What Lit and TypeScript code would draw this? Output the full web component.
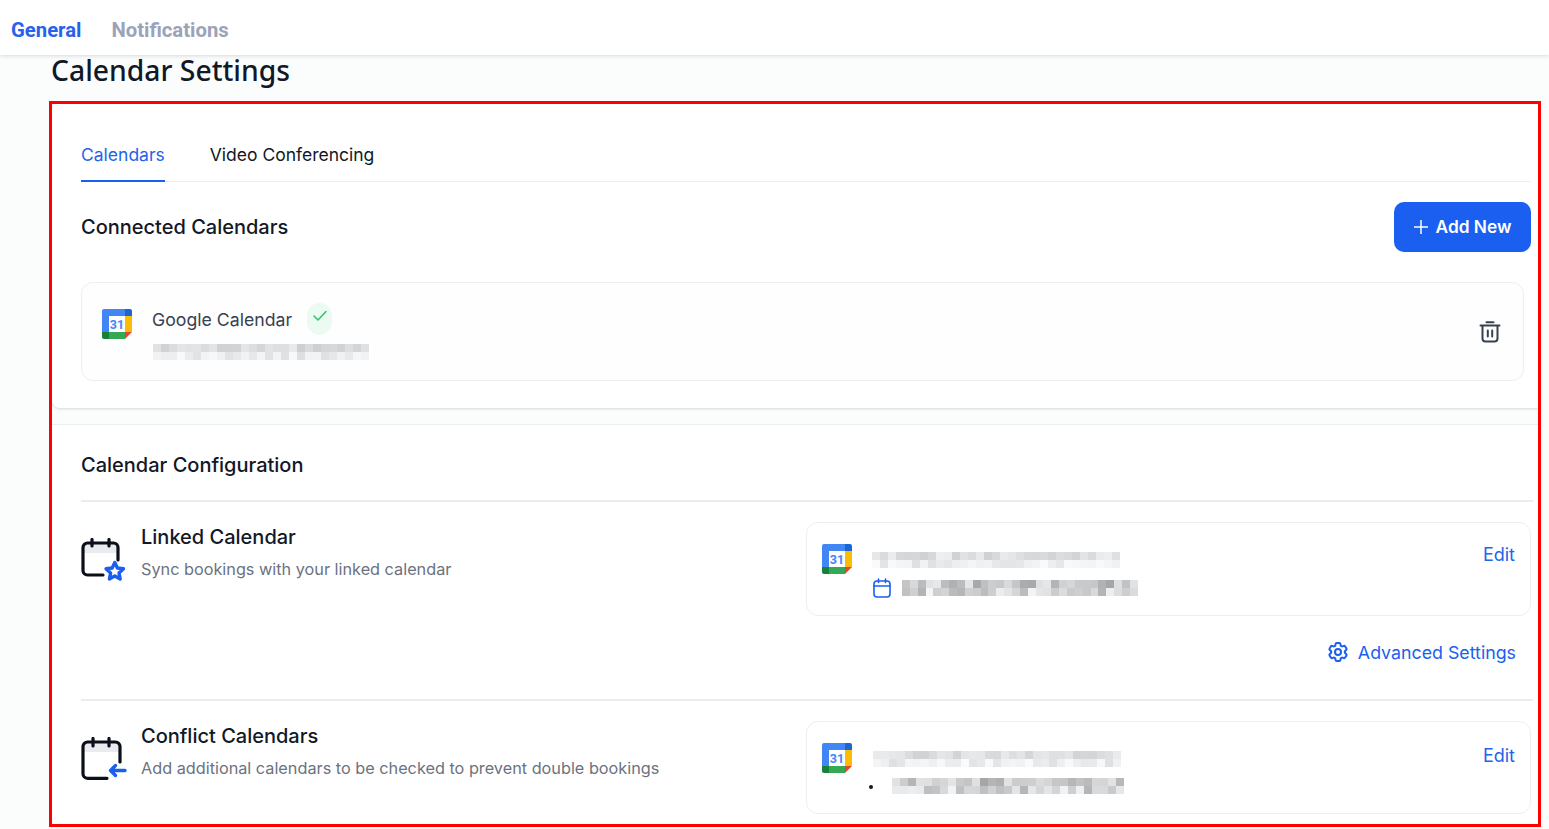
import { LitElement, html, css, svg } from "lit";
import { customElement, property } from "lit/decorators.js";

@customElement("blur-bar")
class BlurBar extends LitElement {
  @property({ type: Number }) cols = 27;
  @property({ type: Number }) seed = 1;
  @property({ type: Number }) low = 205;
  @property({ type: Number }) high = 240;
  @property({ type: Number }) cell = 8;
  static styles = css`
    :host { display: inline-block; line-height: 0; }
    .grid { display: grid; grid-auto-flow: row; }
    .c { display: block; }
  `;
  render() {
    let s = this.seed * 7919 + 13;
    const next = () => {
      s = (s * 1103515245 + 12345) & 0x7fffffff;
      return (s >> 8) % 1000 / 1000;
    };
    const cells = [];
    for (let r = 0; r < 2; r++) {
      for (let c = 0; c < this.cols; c++) {
        const bias = r === 0 ? 0 : 14;
        const v = Math.round(this.low + bias + next() * (this.high - this.low));
        cells.push(html`<i class="c" style="background:rgb(${v},${v + 1},${v + 3})"></i>`);
      }
    }
    return html`<div class="grid" style="grid-template-columns:repeat(${this.cols},${this.cell}px);grid-auto-rows:${this.cell}px">${cells}</div>`;
  }
}

const gcal = html`<svg class="gcal" width="30" height="30" viewBox="0 0 30 30" aria-hidden="true">
  <path d="M2 0H23V7H7V23H0V2A2 2 0 0 1 2 0Z" fill="#4285F4"/>
  <path d="M23 0H28A2 2 0 0 1 30 2V7H23Z" fill="#1967D2"/>
  <rect x="23" y="7" width="7" height="16" fill="#FBBC04"/>
  <rect x="7" y="23" width="16" height="7" fill="#34A853"/>
  <path d="M0 23H7V30H2A2 2 0 0 1 0 28Z" fill="#188038"/>
  <path d="M23 23H30L23 30Z" fill="#EA4335"/>
  <rect x="7" y="7" width="16" height="16" fill="#fff"/>
  <text x="15" y="19.800" text-anchor="middle" font-family="Roboto, sans-serif" font-weight="700" font-size="12.500" fill="#4285F4">31</text>
</svg>`;

const calStar = svg`<svg width="46" height="46" viewBox="0 0 46 46" fill="none" aria-hidden="true">
  <path d="M2 9.500A4.500 4.500 0 0 1 6.500 5H32.500A4.500 4.500 0 0 1 37 9.500V15H2Z" fill="#E9EBEF"/>
  <path d="M22 37H6.500A4.500 4.500 0 0 1 2 32.500V9.500A4.500 4.500 0 0 1 6.500 5H32.500A4.500 4.500 0 0 1 37 9.500V22" stroke="#0B0F19" stroke-width="3.200" stroke-linecap="round"/>
  <path d="M11 1.500V8M28 1.500V8" stroke="#0B0F19" stroke-width="3.200" stroke-linecap="round"/>
  <path d="M33.800 24.500L36.400 30L42.500 30.800L38 35L39.200 41L33.800 38L28.400 41L29.600 35L25 30.800L31.200 30Z" fill="#fff" stroke="#1A5FF0" stroke-width="3.400" stroke-linejoin="round"/>
</svg>`;

const calArrow = svg`<svg width="46" height="46" viewBox="0 0 46 46" fill="none" aria-hidden="true">
  <path d="M2 9.500A4.500 4.500 0 0 1 6.500 5H34.500A4.500 4.500 0 0 1 39 9.500V15H2Z" fill="#E9EBEF"/>
  <path d="M26 41.300H6.500A4.500 4.500 0 0 1 2 36.800V9.500A4.500 4.500 0 0 1 6.500 5H34.500A4.500 4.500 0 0 1 39 9.500V25" stroke="#0B0F19" stroke-width="3.200" stroke-linecap="round"/>
  <path d="M12 1.500V9M28 1.500V9" stroke="#0B0F19" stroke-width="3.200" stroke-linecap="round"/>
  <path d="M44 33.500H30M34.500 28.500L29.500 33.500L34.500 38.500" stroke="#1A5FF0" stroke-width="3.400" stroke-linecap="round" stroke-linejoin="round"/>
</svg>`;

const trash = svg`<svg width="22" height="22" viewBox="0 0 22 22" fill="none" stroke="#374151" stroke-width="2" stroke-linecap="round" stroke-linejoin="round" aria-hidden="true">
  <path d="M1.500 4.500H20.500"/><path d="M7.500 1.200H14.500"/>
  <path d="M3.500 5V17.500A3 3 0 0 0 6.500 20.500H15.500A3 3 0 0 0 18.500 17.500V5"/>
  <path d="M8.800 9.500V15.500M13.200 9.500V15.500"/>
</svg>`;

const smallCal = svg`<svg width="18" height="20" viewBox="0 0 18 20" fill="none" stroke="#1A5FF0" stroke-width="1.600" stroke-linecap="round" aria-hidden="true">
  <rect x="1" y="3" width="16" height="16" rx="3"/><path d="M1 8H17"/><path d="M5.500 1V4.500M12.500 1V4.500"/>
</svg>`;

const gear = svg`<svg width="24" height="24" viewBox="0 0 24 24" fill="none" stroke="#1A5FF0" stroke-width="2" stroke-linecap="round" stroke-linejoin="round" aria-hidden="true">
  <path d="M9.594 3.940c.09-.542.56-.94 1.110-.94h2.593c.55 0 1.020.398 1.110.94l.213 1.281c.063.374.313.686.645.87.074.04.147.083.22.127.325.196.72.257 1.075.124l1.217-.456a1.125 1.125 0 0 1 1.370.49l1.296 2.247a1.125 1.125 0 0 1-.26 1.431l-1.003.827c-.293.241-.438.613-.43.992a7.723 7.723 0 0 1 0 .255c-.008.378.137.75.43.991l1.004.827c.424.35.534.955.26 1.430l-1.298 2.247a1.125 1.125 0 0 1-1.369.491l-1.217-.456c-.355-.133-.75-.072-1.076.124a6.470 6.470 0 0 1-.22.128c-.331.183-.581.495-.644.869l-.213 1.281c-.09.543-.56.94-1.110.94h-2.594c-.55 0-1.019-.398-1.110-.94l-.213-1.281c-.062-.374-.312-.686-.644-.87a6.520 6.520 0 0 1-.22-.127c-.325-.196-.72-.257-1.076-.124l-1.217.456a1.125 1.125 0 0 1-1.369-.49l-1.297-2.247a1.125 1.125 0 0 1 .26-1.431l1.004-.827c.292-.24.437-.613.43-.991a6.932 6.932 0 0 1 0-.255c.007-.38-.138-.751-.43-.992l-1.004-.827a1.125 1.125 0 0 1-.26-1.430l1.297-2.247a1.125 1.125 0 0 1 1.370-.491l1.216.456c.356.133.751.072 1.076-.124.072-.044.146-.086.22-.128.332-.183.582-.495.644-.869l.214-1.280Z"/>
  <circle cx="12" cy="12" r="3"/>
</svg>`;

@customElement("app-root")
class AppRoot extends LitElement {
  static styles = css`
    :host {
      display: block;
      height: 829px;
      overflow: hidden;
      background: #fbfdfd;
      font-family: Inter, "Liberation Sans", sans-serif;
      color: #111827;
    }
    .topbar {
      position: relative;
      z-index: 2;
      height: 55px;
      background: #fff;
      box-shadow: 0 1px 4px rgba(17, 24, 39, 0.16);
      display: flex;
      align-items: center;
      gap: 30px;
      padding: 5px 11px 0;
      box-sizing: border-box;
      font-family: Roboto, sans-serif;
      font-weight: 700;
      font-size: 20.300px;
    }
    .topbar .on { color: #2563eb; }
    .topbar .off { color: #9ca3b8; }
    h1 {
      margin: 0;
      padding-left: 51px;
      height: 46px;
      line-height: 30px;
      font-family: "Noto Sans", sans-serif;
      font-weight: 500;
      font-size: 28.300px;
      color: #111827;
    }
    .frame {
      margin-left: 49px;
      width: 1492px;
      height: 726px;
      box-sizing: border-box;
      border: 3px solid #ff0000;
      overflow: hidden;
      display: flex;
      flex-direction: column;
      gap: 16px;
    }
    .panel {
      background: #fff;
      padding-left: 29px;
      padding-right: 7px;
      flex: none;
    }
    .top {
      height: 304px;
      box-sizing: border-box;
      border-radius: 8px 0 0 8px;
      box-shadow: 0 1px 3px rgba(17, 24, 39, 0.16);
      padding-top: 26px;
    }
    .tabs {
      display: flex;
      gap: 45px;
      height: 52px;
      box-sizing: border-box;
      border-bottom: 1px solid #eceef1;
      font-size: 17.500px;
    }
    .tab {
      height: 52px;
      box-sizing: border-box;
      line-height: 50px;
    }
    .tab.active { color: #2563eb; border-bottom: 2px solid #1a5ff0; }
    .head {
      display: flex;
      justify-content: space-between;
      align-items: center;
      height: 50px;
      margin-top: 20px;
      font-size: 20px;
      font-weight: 500;
    }
    .add {
      width: 137px;
      height: 50px;
      box-sizing: border-box;
      border-radius: 10px;
      background: #1a5ff0;
      color: #fff;
      display: flex;
      align-items: center;
      justify-content: center;
      gap: 8px;
      padding-bottom: 1px;
      font-size: 17.300px;
      font-weight: 600;
    }
    .gcard {
      margin-top: 30px;
      margin-right: 7px;
      height: 99px;
      box-sizing: border-box;
      border: 1px solid #eceef1;
      border-radius: 12px;
      background: #fefefe;
      padding: 20px 22px 0 20px;
      display: grid;
      grid-template-columns: 30px 1fr 22px;
      column-gap: 20px;
    }
    .gcal { display: block; }
    .gcard .gcal { margin-top: 6px; }
    .gname {
      display: flex;
      align-items: center;
      gap: 15px;
      height: 32px;
      font-size: 17.700px;
      color: #374151;
    }
    .check {
      width: 25px;
      height: 32px;
      border-radius: 13px;
      background: #ecfbf1;
      display: flex;
      justify-content: center;
      padding-top: 7px;
      box-sizing: border-box;
    }
    .gcard blur-bar { margin: 9px 0 0 1px; }
    .trash { margin-top: 18px; }
    .bottom { flex: 1; border-top: 1px solid #eceef1; }
    .ctitle {
      height: 77px;
      margin-right: -2px;
      box-sizing: border-box;
      border-bottom: 2px solid #ebebf0;
      line-height: 80px;
      font-size: 20px;
      font-weight: 500;
    }
    .row { display: grid; grid-template-columns: 725px 725px; }
    .row.first { margin-right: -2px; border-bottom: 2px solid #ebebf0; padding-top: 20px; height: 177px; }
    .row.second { padding-top: 20px; }
    .lead { display: flex; align-items: flex-start; }
    .lead svg { display: block; flex: none; }
    .lead .ic { width: 60px; margin-top: 16px; }
    .lead h3 { margin: 0; font-size: 20px; font-weight: 500; line-height: 30px; color: #111827; }
    .lead p { margin: 3px 0 0; font-size: 16.250px; line-height: 28px; color: #6b7280; }
    .box {
      border: 1px solid #eceef1;
      border-radius: 12px;
      box-sizing: border-box;
      padding: 21px 15px 0;
      display: grid;
      grid-template-columns: 30px 1fr auto;
      column-gap: 20px;
    }
    .edit { color: #2563eb; font-size: 18px; line-height: 22px; }
    .line2 { display: flex; align-items: center; margin: 10px 0 0 1px; gap: 11px; }
    .row.first .box { height: 94px; }
    .row.second .box { height: 93px; }
    .row.second .edit { margin-top: 2px; }
    .row.second .line1 { margin-left: 1px; }
    .line2.bul { margin: 11px 0 0 -3px; gap: 19px; }
    .dot { width: 4px; height: 4px; border-radius: 50%; background: #111827; margin-top: 1px; }
    .adv {
      grid-column: 2;
      display: flex;
      align-items: center;
      justify-content: flex-end;
      gap: 8px;
      margin: 24px 15px 0 0;
      height: 24px;
      color: #1a5ff0;
      font-size: 17.800px;
    }
  `;

  render() {
    return html`
      <div class="topbar"><span class="on">General</span><span class="off">Notifications</span></div>
      <h1>Calendar Settings</h1>
      <div class="frame">
        <section class="panel top">
          <div class="tabs">
            <div class="tab active">Calendars</div>
            <div class="tab">Video Conferencing</div>
          </div>
          <div class="head">
            <span>Connected Calendars</span>
            <div class="add">
              <svg width="14" height="14" viewBox="0 0 14 14" stroke="#fff" stroke-width="1.500" aria-hidden="true"><path d="M7 0V14M0 7H14"/></svg>
              <span>Add New</span>
            </div>
          </div>
          <div class="gcard">
            ${gcal}
            <div>
              <div class="gname">
                <span>Google Calendar</span>
                <span class="check"><svg width="14" height="12" viewBox="0 0 14 12" fill="none" stroke="#2fc26b" stroke-width="1.500" stroke-linecap="round" stroke-linejoin="round" aria-hidden="true"><path d="M1 6L5 10L13 1.500"/></svg></span>
              </div>
              <blur-bar .cols=${27} .seed=${3} .low=${205} .high=${235}></blur-bar>
            </div>
            <div class="trash">${trash}</div>
          </div>
        </section>
        <section class="panel bottom">
          <div class="ctitle">Calendar Configuration</div>
          <div class="row first">
            <div class="lead">
              <div class="ic">${calStar}</div>
              <div class="txt"><h3>Linked Calendar</h3><p>Sync bookings with your linked calendar</p></div>
            </div>
            <div>
              <div class="box">
                ${gcal}
                <div>
                  <div class="line1"><blur-bar .cols=${31} .seed=${5} .low=${208} .high=${238}></blur-bar></div>
                  <div class="line2">${smallCal}<blur-bar .cols=${30} .cell=${7.87} .seed=${9} .low=${165} .high=${232}></blur-bar></div>
                </div>
                <span class="edit">Edit</span>
              </div>
              <div class="adv">${gear}<span>Advanced Settings</span></div>
            </div>
          </div>
          <div class="row second">
            <div class="lead">
              <div class="ic">${calArrow}</div>
              <div class="txt"><h3>Conflict Calendars</h3><p>Add additional calendars to be checked to prevent double bookings</p></div>
            </div>
            <div class="box">
              ${gcal}
              <div>
                <div class="line1"><blur-bar .cols=${31} .seed=${12} .low=${208} .high=${236}></blur-bar></div>
                <div class="line2 bul"><span class="dot"></span><blur-bar .cols=${29} .seed=${17} .low=${165} .high=${230}></blur-bar></div>
              </div>
              <span class="edit">Edit</span>
            </div>
          </div>
        </section>
      </div>
    `;
  }
}
